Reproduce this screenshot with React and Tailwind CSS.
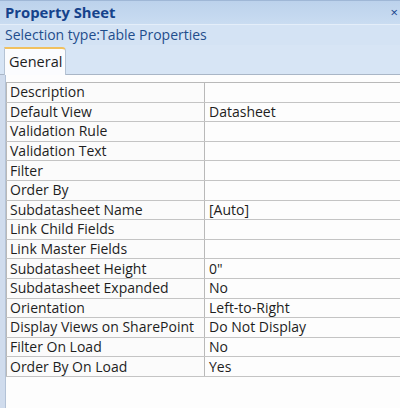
export default function App() {
  const rows = [
    ["Description", ""],
    ["Default View", "Datasheet"],
    ["Validation Rule", ""],
    ["Validation Text", ""],
    ["Filter", ""],
    ["Order By", ""],
    ["Subdatasheet Name", "[Auto]"],
    ["Link Child Fields", ""],
    ["Link Master Fields", ""],
    ["Subdatasheet Height", "0\""],
    ["Subdatasheet Expanded", "No"],
    ["Orientation", "Left-to-Right"],
    ["Display Views on SharePoint", "Do Not Display"],
    ["Filter On Load", "No"],
    ["Order By On Load", "Yes"],
  ];
  return (
    <div
      className="w-[400px] h-[408px] overflow-hidden flex flex-col bg-[#d9e5f3] text-[#1e1e1e]"
      style={{ fontFamily: '"Open Sans", "Noto Sans", sans-serif' }}
    >
      <div className="h-[25px] shrink-0 flex items-center justify-between pl-[5px] pr-[2px] bg-gradient-to-b from-[#bcd2ec] to-[#c9dcf1] border-t border-[#9fb7d6] border-b border-b-[#e4eef9]">
        <span className="text-[14.8px] font-bold text-[#15428b] leading-none">Property Sheet</span>
        <span className="text-[13px] text-[#15428b] leading-none">×</span>
      </div>
      <div className="h-[20px] shrink-0 flex items-center pl-[5px] bg-[#d4e3f4] text-[14px] text-[#1f4d8c] leading-none">
        Selection type:Table Properties
      </div>
      <div className="h-[30px] shrink-0 flex items-end pl-[4px] bg-[#d7e5f5] border-b border-[#a9b6c6]">
        <div className="h-[28px] w-[62px] bg-[#fbfcfe] border-t-2 border-t-[#f1c15f] border-l border-r border-[#b5c3d4] rounded-tr-[4px] flex items-center pl-[4px] text-[14.5px] text-[#1e1e1e] mb-[-1px]">
          General
        </div>
      </div>
      <div className="flex-1 flex bg-[#dde7f3]">
        <div className="w-[6px] shrink-0 bg-[#d0dced] border-r border-[#b3c2d6]"></div>
        <div className="flex-1 bg-[#fdfdfd] pt-[7px]">
          <div className="border-t border-[#b9b9b9]">
            {rows.map(([k, v]) => (
              <div key={k} className="h-[19.6px] flex border-b border-[#c4c4c4] text-[14px] leading-none">
                <div className="w-[199px] shrink-0 border-r border-l border-[#b9b9b9] flex items-center pl-[3px] bg-[#fbfbfb] whitespace-nowrap overflow-hidden">
                  {k}
                </div>
                <div className="flex-1 flex items-center pl-[4px] whitespace-nowrap">{v}</div>
              </div>
            ))}
          </div>
        </div>
      </div>
    </div>
  );
}
